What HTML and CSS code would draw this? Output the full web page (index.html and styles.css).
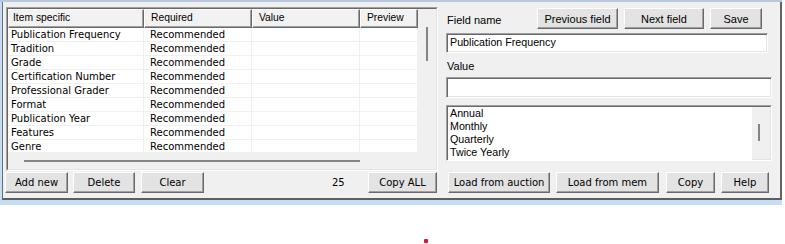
FILE: index.html
```html
<!DOCTYPE html>
<html>
<head>
<meta charset="utf-8">
<link rel="stylesheet" href="styles.css">
</head>
<body>
<div class="window">
  <div class="client">
    <div class="main">
      <div class="listview">
        <div class="lv-inner">
          <div class="lv-body">
            <div class="lv-header">
              <div class="th c1">Item specific</div>
              <div class="th c2">Required</div>
              <div class="th c3">Value</div>
              <div class="th c4">Preview</div>
            </div>
            <div class="lv-rows">
              <div class="row"><div class="td c1">Publication Frequency</div><div class="td c2">Recommended</div><div class="td"></div><div class="td"></div></div>
              <div class="row"><div class="td c1">Tradition</div><div class="td c2">Recommended</div><div class="td"></div><div class="td"></div></div>
              <div class="row"><div class="td c1">Grade</div><div class="td c2">Recommended</div><div class="td"></div><div class="td"></div></div>
              <div class="row"><div class="td c1">Certification Number</div><div class="td c2">Recommended</div><div class="td"></div><div class="td"></div></div>
              <div class="row"><div class="td c1">Professional Grader</div><div class="td c2">Recommended</div><div class="td"></div><div class="td"></div></div>
              <div class="row"><div class="td c1">Format</div><div class="td c2">Recommended</div><div class="td"></div><div class="td"></div></div>
              <div class="row"><div class="td c1">Publication Year</div><div class="td c2">Recommended</div><div class="td"></div><div class="td"></div></div>
              <div class="row"><div class="td c1">Features</div><div class="td c2">Recommended</div><div class="td"></div><div class="td"></div></div>
              <div class="row"><div class="td c1">Genre</div><div class="td c2">Recommended</div><div class="td"></div><div class="td"></div></div>
            </div>
            <div class="hscroll"><div class="hthumb"></div></div>
          </div>
          <div class="vscroll"><div class="vthumb"></div></div>
        </div>
      </div>
      <div class="panel">
        <div class="top-row">
          <div class="label field-label">Field name</div>
          <button class="btn top-btn w-prev">Previous field</button>
          <button class="btn top-btn w-next">Next field</button>
          <button class="btn top-btn w-save">Save</button>
        </div>
        <div class="textbox tb-name">Publication Frequency</div>
        <div class="label value-label">Value</div>
        <div class="textbox tb-value"></div>
        <div class="listbox">
          <div class="lb-items">
            <div class="lb-item">Annual</div>
            <div class="lb-item">Monthly</div>
            <div class="lb-item">Quarterly</div>
            <div class="lb-item">Twice Yearly</div>
          </div>
          <div class="lb-scroll"><div class="lb-thumb"></div></div>
        </div>
      </div>
    </div>
    <div class="bottom">
      <button class="btn b-add">Add new</button>
      <button class="btn b-del">Delete</button>
      <button class="btn b-clear">Clear</button>
      <span class="count">25</span>
      <button class="btn b-copyall">Copy ALL</button>
      <button class="btn b-load">Load from auction</button>
      <button class="btn b-mem">Load from mem</button>
      <button class="btn b-copy">Copy</button>
      <button class="btn b-help">Help</button>
    </div>
  </div>
</div>
<div class="dot"></div>
</body>
</html>
```
FILE: styles.css
```css
html, body {
  margin: 0;
  padding: 0;
  background: #ffffff;
}

body {
  width: 785px;
  height: 244px;
  overflow: hidden;
  font-family: "Liberation Sans", Arial, sans-serif;
  color: #000;
}

.window {
  box-sizing: border-box;
  width: 782px;
  border-top: 2px solid #b7c8dc;
  padding: 0 0 5px 2px;
  background: #c4dcf4;
}

.client {
  height: 196px;
  background: #f0f0f0;
  border-left: 1px solid #6e6e6e;
  border-right: 2px solid #646464;
  border-bottom: 2px solid #5e5e5e;
  display: flex;
  flex-direction: column;
}

.main {
  display: flex;
  height: 169px;
}

/* ---------- list view ---------- */
.listview {
  box-sizing: border-box;
  margin: 5px 0 0 3px;
  width: 432px;
  height: 164px;
  border: 1px solid;
  border-color: #a0a0a0 #ffffff #ffffff #a0a0a0;
  display: flex;
}

.lv-inner {
  flex: 1;
  display: flex;
  border: 1px solid;
  border-color: #696969 #e3e3e3 #e3e3e3 #696969;
  background: #f0f0f0;
  min-height: 0;
}

.lv-body {
  width: 410px;
  display: flex;
  flex-direction: column;
}

.lv-header {
  display: grid;
  grid-template-columns: 136px 108px 108px 58px;
  height: 19px;
}

.th {
  box-sizing: border-box;
  height: 19px;
  background: #f2f2f2;
  border-top: 1px solid #ffffff;
  border-left: 1px solid #ffffff;
  border-right: 1px solid #696969;
  border-bottom: 1px solid #696969;
  box-shadow: inset -1px -1px 0 #a0a0a0;
  font-size: 10.3px;
  line-height: 16px;
  padding-left: 6px;
  white-space: nowrap;
  overflow: hidden;
}

.th.c1 {
  padding-left: 4px;
}

.lv-rows {
  height: 124px;
  overflow: hidden;
  background: #ffffff;
}

.row {
  display: grid;
  grid-template-columns: 136px 108px 108px 58px;
  height: 14px;
}

.td {
  box-sizing: border-box;
  height: 14px;
  border-right: 1px solid #f0f0f0;
  border-bottom: 1px solid #f0f0f0;
  font-family: "DejaVu Sans", Verdana, sans-serif;
  font-size: 10px;
  line-height: 12px;
  padding: 1px 0 0 6px;
  white-space: nowrap;
  overflow: hidden;
}

.td.c1 {
  padding-left: 3px;
}

.hscroll {
  height: 17px;
  background: #f0f0f0;
  overflow: hidden;
}

.hthumb {
  margin: 8px 0 0 16px;
  width: 336px;
  height: 2px;
  background: #858585;
}

.vscroll {
  width: 18px;
  background: #f0f0f0;
}

.vthumb {
  margin: 18px 0 0 8px;
  width: 2px;
  height: 34px;
  background: #858585;
}

/* ---------- right panel ---------- */
.panel {
  margin: 6px 0 0 8px;
  width: 326px;
  display: flex;
  flex-direction: column;
  align-items: flex-start;
}

.top-row {
  display: flex;
  height: 21px;
}

.label {
  font-size: 11px;
  line-height: 13px;
  padding-left: 1px;
  white-space: nowrap;
}

.field-label {
  width: 90px;
  margin-top: 6px;
}

.value-label {
  padding-top: 7px;
}

.btn {
  box-sizing: border-box;
  height: 21px;
  padding: 0;
  margin: 0;
  background: #e3e3e3;
  border: 1px solid;
  border-color: #ffffff #696969 #696969 #ffffff;
  box-shadow: inset -1px -1px 0 #a0a0a0;
  font-family: "DejaVu Sans", Verdana, sans-serif;
  font-size: 10px;
  line-height: 18px;
  color: #000;
  text-align: center;
  white-space: nowrap;
}

.top-btn {
  font-family: "Liberation Sans", Arial, sans-serif;
  font-size: 11px;
}

.w-prev { width: 81px; }
.w-next { width: 80px; margin-left: 6px; }
.w-save { width: 52px; margin-left: 6px; }

.textbox {
  box-sizing: border-box;
  background: #ffffff;
  border: 1px solid;
  border-color: #a0a0a0 #ffffff #ffffff #a0a0a0;
  box-shadow: inset 1px 1px 0 #696969, inset -1px -1px 0 #e3e3e3;
  font-size: 10.7px;
  padding-left: 3px;
  white-space: nowrap;
}

.tb-name {
  margin-top: 4px;
  width: 322px;
  height: 20px;
  line-height: 17px;
}

.tb-value {
  margin-top: 4px;
  width: 326px;
  height: 21px;
}

.listbox {
  box-sizing: border-box;
  margin-top: 7px;
  width: 326px;
  height: 56px;
  background: #ffffff;
  border: 1px solid;
  border-color: #a0a0a0 #ffffff #ffffff #a0a0a0;
  display: flex;
}

.lb-items {
  flex: 1;
  border-top: 1px solid #696969;
  border-left: 1px solid #696969;
  padding-left: 2px;
  overflow: hidden;
}

.lb-item {
  font-size: 10.7px;
  line-height: 13px;
  white-space: nowrap;
}

.lb-scroll {
  width: 18px;
  background: #f0f0f0;
  border-top: 1px solid #696969;
  border-right: 1px solid #e3e3e3;
  border-bottom: 1px solid #e3e3e3;
}

.lb-thumb {
  margin: 17px 0 0 6px;
  width: 2px;
  height: 17px;
  background: #858585;
}

/* ---------- bottom row ---------- */
.bottom {
  display: flex;
  align-items: center;
  margin-top: 1px;
  padding-left: 2px;
  height: 21px;
}

.b-add { width: 63px; }
.b-del { width: 62px; margin-left: 5px; }
.b-clear { width: 63px; margin-left: 6px; }

.count {
  margin-left: 128px;
  width: 36px;
  font-family: "DejaVu Sans", Verdana, sans-serif;
  font-size: 10px;
  line-height: 13px;
}

.b-copyall { width: 69px; }
.b-load { width: 102px; margin-left: 11px; }
.b-mem { width: 103px; margin-left: 6px; }
.b-copy { width: 49px; margin-left: 7px; }
.b-help { width: 48px; margin-left: 6px; }

.dot {
  position: absolute;
  left: 424px;
  top: 239px;
  width: 4px;
  height: 4px;
  border-radius: 1px;
  background: #e4141c;
}
```
